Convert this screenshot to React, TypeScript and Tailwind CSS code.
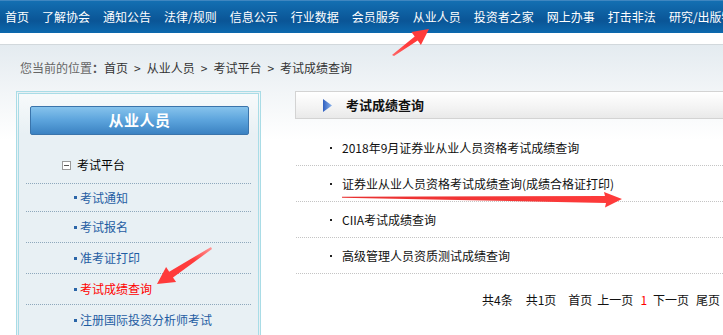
import React from "react";

const navItems = [
  "首页",
  "了解协会",
  "通知公告",
  "法律/规则",
  "信息公示",
  "行业数据",
  "会员服务",
  "从业人员",
  "投资者之家",
  "网上办事",
  "打击非法",
  "研究/出版物",
];

const sideItems = [
  { label: "考试通知" },
  { label: "考试报名" },
  { label: "准考证打印" },
  { label: "考试成绩查询", active: true },
  { label: "注册国际投资分析师考试" },
];

const results = [
  "2018年9月证券业从业人员资格考试成绩查询",
  "证券业从业人员资格考试成绩查询(成绩合格证打印)",
  "CIIA考试成绩查询",
  "高级管理人员资质测试成绩查询",
];

// red annotation arrows drawn over the screenshot
function Arrows() {
  return (
    <svg
      className="absolute left-0 top-0 pointer-events-none"
      width="723"
      height="335"
      viewBox="0 0 723 335"
    >
      <defs>
        <linearGradient id="ar1" x1="0" y1="1" x2="1" y2="0">
          <stop offset="0" stopColor="#ff6a6a" />
          <stop offset="0.4" stopColor="#ff3b3b" />
        </linearGradient>
        <linearGradient id="ar2" x1="1" y1="0" x2="0" y2="1">
          <stop offset="0" stopColor="#ff9a9a" />
          <stop offset="0.35" stopColor="#ff3b3b" />
        </linearGradient>
        <linearGradient id="ar3" x1="0" y1="0" x2="1" y2="0">
          <stop offset="0" stopColor="#e83030" />
          <stop offset="1" stopColor="#ff3b3b" />
        </linearGradient>
      </defs>
      <polygon
        fill="url(#ar1)"
        points="392,55 414.7,36.5 411.4,32.1 429,29 420.9,44.9 417.7,40.5 394,56"
      />
      <polygon
        fill="url(#ar2)"
        points="211,247 169.2,271.7 166.1,267.1 157,284 176.1,282.1 173,277.5 212,249"
      />
      <polygon
        fill="url(#ar3)"
        points="342,196.8 605,196 604,192 622,199 605,207.5 606,203 342,197.8"
      />
    </svg>
  );
}

export default function App() {
  return (
    <div className="relative w-[723px] h-[335px] overflow-hidden bg-white text-[12px] font-['Noto_Sans_CJK_SC',sans-serif]">
      {/* top navigation */}
      <div className="h-[33px] flex items-center gap-[13px] pl-[5px] whitespace-nowrap overflow-hidden text-white border-t border-[#3f86c0] bg-[linear-gradient(#136fb2,#0a5596_62%,#0c69ae)]">
        {navItems.map((item) => (
          <span key={item} className="leading-none">
            {item}
          </span>
        ))}
      </div>
      <div className="h-[12px] bg-white border-b border-[#d2d8dc]" />

      <div className="bg-[linear-gradient(#e4ebf0,#f3f6f8_50px,#ffffff_95px)] h-[290px]">
        {/* breadcrumb */}
        <div className="h-[46px] flex items-center pl-[20px] text-[#333]">
          <span className="text-[#666]">您当前的位置</span>
          <span className="font-bold text-[#555]">：</span>
          <span>首页</span>
          <span className="mx-[6px]">&gt;</span>
          <span>从业人员</span>
          <span className="mx-[6px]">&gt;</span>
          <span>考试平台</span>
          <span className="mx-[6px]">&gt;</span>
          <span>考试成绩查询</span>
        </div>

        <div className="flex pl-[16px]">
          {/* left sidebar */}
          <aside className="w-[245px] shrink-0 h-[260px] border-[3px] border-double border-[#a9dce6] bg-[linear-gradient(#f7fafb,#e8f0f4_40px)]">
            <div className="pt-[12px] pl-[11px]">
              <div className="w-[219px] h-[29px] flex items-center justify-center rounded-[2px] border border-[#3a74ab] bg-[linear-gradient(#86c3ec,#5ba3dc_50%,#3b82c2)] text-white text-[15px] font-bold tracking-[0.5px]">
                从业人员
              </div>
            </div>
            <div className="mx-[7px]">
              <div className="mt-[21px] h-[18px] mb-[9px] flex items-center pl-[36px]">
                <span className="w-[9px] h-[9px] border border-[#9a9a9a] bg-white flex items-center justify-center mr-[6px]">
                  <span className="w-[5px] h-px bg-[#555]" />
                </span>
                <span className="text-black">考试平台</span>
              </div>
              <div className="border-t border-dotted border-[#8ea8bc]">
                {sideItems.map((item, i) => (
                  <div
                    key={item.label}
                    className={`flex items-center pl-[48px] border-b border-dotted border-[#8ea8bc] ${
                      i === 0 ? "h-[28px]" : "h-[31px]"
                    }`}
                  >
                    <span className="w-[3px] h-[3px] bg-[#2a65a8] mr-[3px]" />
                    <span
                      className={item.active ? "text-[#ff0000]" : "text-[#1f5da3]"}
                    >
                      {item.label}
                    </span>
                  </div>
                ))}
              </div>
            </div>
          </aside>

          {/* right content */}
          <section className="ml-[34px] w-[440px] shrink-0">
            <div className="h-[28px] flex items-center pl-[27px] border border-[#d3d3d3] bg-[linear-gradient(#ffffff,#f3f3f3_60%,#e9e9e9)]">
              <svg width="9" height="13" viewBox="0 0 9 13" className="mr-[14px]">
                <defs>
                  <linearGradient id="tri" x1="0" y1="0" x2="1" y2="0">
                    <stop offset="0" stopColor="#2f5fc0" />
                    <stop offset="1" stopColor="#8cb4ec" />
                  </linearGradient>
                </defs>
                <polygon points="0,0 9,6.5 0,13" fill="url(#tri)" />
              </svg>
              <span className="font-bold text-[13px] text-[#111]">考试成绩查询</span>
            </div>

            <ul className="mt-[11px] ml-px">
              {results.map((r) => (
                <li
                  key={r}
                  className="h-[36px] flex items-center pl-[34px] border-b border-dotted border-[#c4c4c4] text-[#111]"
                >
                  <span className="w-[2px] h-[2px] bg-[#222] mr-[10px]" />
                  <span>{r}</span>
                </li>
              ))}
            </ul>

            <div className="h-[52px] flex items-center pl-[187px] whitespace-nowrap text-[#111]">
              <span>共4条</span>
              <span className="ml-[13px]">共1页</span>
              <span className="ml-[12px]">首页</span>
              <span className="ml-[5px]">上一页</span>
              <span className="ml-[7px] text-[#ff0000]">1</span>
              <span className="ml-[6px]">下一页</span>
              <span className="ml-[7px]">尾页</span>
              <span className="ml-[5px]">转到</span>
            </div>
          </section>
        </div>
      </div>

      <Arrows />
    </div>
  );
}
